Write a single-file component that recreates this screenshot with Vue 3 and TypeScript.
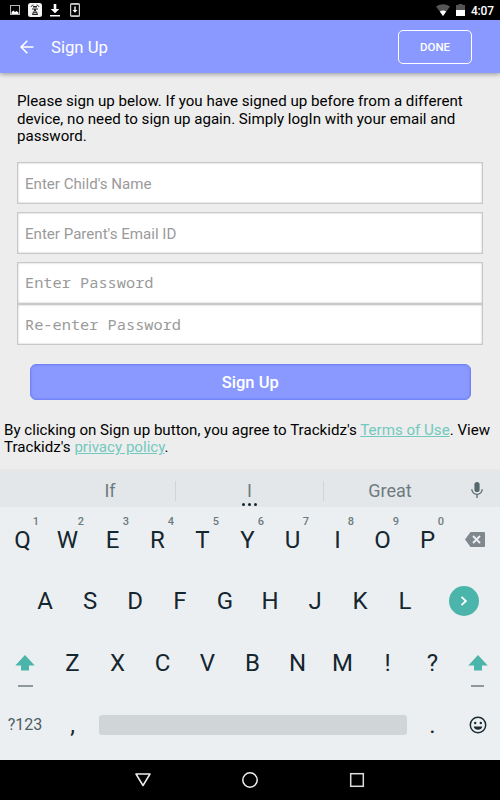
<template>
  <div class="screen">
    <header class="status-bar">
      <div class="status-left">
        <svg width="12" height="12" viewBox="0 0 12 12">
          <rect x="1.500" y="1.500" width="9" height="9" fill="none" stroke="#b8b8b8" />
          <path d="M2.500 10V8l2-1.500 1.500 1.500L7.500 7l2 1.500V10z" fill="#fff" />
        </svg>
        <svg width="14" height="14" viewBox="0 0 14 14">
          <rect width="14" height="14" rx="2.500" fill="#f4f4f4" />
          <path d="M3 4Q3.500 2 5.500 2M11 4Q10.500 2 8.500 2" stroke="#444" fill="none" />
          <path d="M5 3h4v1.500H5zM4 5.500h6v1H8v1.500H6V6.500H4z" fill="#222" />
          <path d="M5 8.500h4l1 3.500H4z" fill="#222" />
          <path d="M5.500 10.300h3" stroke="#eee" />
        </svg>
        <svg width="10" height="13" viewBox="0 0 10 13">
          <path d="M3.700 0h2.600v5h3L5 9.300.7 5h3zM0 11h10v1.600H0z" fill="#fff" />
        </svg>
        <svg width="10" height="14" viewBox="0 0 10 14">
          <rect x=".6" y=".6" width="8.800" height="12.800" rx="1" fill="none" stroke="#ccc" stroke-width="1.200" />
          <path d="M1 1.500h8M1 12.500h8" stroke="#aaa" />
          <path d="M4.300 3.500h1.400v3.500h1.800L5 9.800 2.500 7h1.800z" fill="#fff" />
        </svg>
      </div>
      <div class="status-right">
        <svg width="14" height="12" viewBox="0 0 14 12">
          <path d="M0 2.500Q7-2 14 2.500L7 12z" fill="#555" />
          <path d="M3.800 7.600Q7 5.600 10.200 7.600L7 12z" fill="#fff" />
        </svg>
        <svg width="9" height="12" viewBox="0 0 9 12">
          <path d="M2.500 0h4v1H9v5H0V1h2.500z" fill="#555" />
          <path d="M0 6h9v6H0z" fill="#fff" />
        </svg>
        <span class="clock">4:07</span>
      </div>
    </header>

    <div class="toolbar">
      <button class="back-btn" aria-label="Back">
        <svg width="14" height="14" viewBox="0 0 14 14">
          <path d="M13.500 7H1.300M7.300 .8L1.100 7l6.200 6.200" fill="none" stroke="#fff" stroke-width="1.600" />
        </svg>
      </button>
      <h1>Sign Up</h1>
      <button class="done-btn">DONE</button>
    </div>

    <main class="content">
      <p class="intro">
        Please sign up below. If you have signed up before from a different<br />
        device, no need to sign up again. Simply logIn with your email and<br />
        password.
      </p>

      <form class="form" @submit.prevent>
        <input
          v-for="field in fields"
          :key="field.name"
          v-model="form[field.name]"
          :type="field.type"
          :placeholder="field.label"
          :class="['field', { password: field.type === 'password' }]"
        />
        <button class="signup-btn" type="submit">Sign Up</button>
      </form>

      <p class="terms">
        By clicking on Sign up button, you agree to Trackidz's <a href="#">Terms of Use</a>. View<br />
        Trackidz's <a href="#">privacy policy</a>.
      </p>
    </main>

    <section class="keyboard">
      <div class="suggestions">
        <span class="suggestion first">If</span>
        <span class="suggestion middle">I<i class="more"><b></b><b></b><b></b></i></span>
        <span class="suggestion last">Great</span>
        <svg class="mic" width="12" height="16" viewBox="0 0 12 16">
          <rect x="3.400" y="0" width="5.200" height="10" rx="2.600" fill="#57676e" />
          <path d="M.8 7.200a5.200 5.200 0 0 0 10.400 0M6 12.400V16" fill="none" stroke="#57676e" stroke-width="1.300" />
        </svg>
      </div>

      <div class="keys">
        <div class="row">
          <button v-for="(letter, i) in topRow" :key="letter" class="key">
            {{ letter }}<sup>{{ (i + 1) % 10 }}</sup>
          </button>
          <button class="key wide" aria-label="Delete">
            <svg width="20" height="15" viewBox="0 0 20 15">
              <path d="M5.500 0H19a1 1 0 0 1 1 1v13a1 1 0 0 1-1 1H5.500L0 7.500z" fill="#7e888d" />
              <path d="M8 4l7 7M15 4l-7 7" stroke="#eceff1" stroke-width="1.900" />
            </svg>
          </button>
        </div>

        <div class="row home">
          <button v-for="letter in homeRow" :key="letter" class="key">{{ letter }}</button>
          <button class="key enter" aria-label="Next">
            <span class="enter-circle">
              <svg width="8" height="10" viewBox="0 0 8 10">
                <path d="M1.500 .8L5.900 5 1.500 9.200" fill="none" stroke="#fff" stroke-width="1.800" />
              </svg>
            </span>
          </button>
        </div>

        <div class="row">
          <button class="key wide shift" aria-label="Shift">
            <svg width="20" height="16" viewBox="0 0 20 16">
              <path d="M10 0l9.700 10.500H14V15.500H6V10.500H.3z" fill="#4bb5ab" />
            </svg>
            <i class="dash"></i>
          </button>
          <button v-for="letter in bottomRow" :key="letter" class="key">{{ letter }}</button>
          <button class="key shift" aria-label="Shift">
            <svg width="20" height="16" viewBox="0 0 20 16">
              <path d="M10 0l9.700 10.500H14V15.500H6V10.500H.3z" fill="#4bb5ab" />
            </svg>
            <i class="dash short"></i>
          </button>
        </div>

        <div class="row">
          <button class="key wide symbols">?123</button>
          <button class="key">,</button>
          <button class="key space" aria-label="Space"><span></span></button>
          <button class="key">.</button>
          <button class="key" aria-label="Emoji">
            <svg width="18" height="18" viewBox="0 0 18 18">
              <circle cx="9" cy="9" r="7.700" fill="none" stroke="#1a2b34" stroke-width="1.500" />
              <circle cx="6.200" cy="7" r="1.200" fill="#1a2b34" />
              <circle cx="11.800" cy="7" r="1.200" fill="#1a2b34" />
              <path d="M4.600 10.500h8.800a4.600 4.600 0 0 1-8.800 0z" fill="#1a2b34" />
            </svg>
          </button>
        </div>
      </div>
    </section>

    <nav class="nav-bar">
      <button aria-label="Back">
        <svg width="18" height="16" viewBox="0 0 18 16">
          <path d="M2 2h14L9 13.500z" fill="none" stroke="#eee" stroke-width="1.500" stroke-linejoin="round" />
        </svg>
      </button>
      <button aria-label="Home">
        <svg width="18" height="18" viewBox="0 0 18 18">
          <circle cx="9" cy="9" r="7.200" fill="none" stroke="#eee" stroke-width="1.500" />
        </svg>
      </button>
      <button aria-label="Recent apps">
        <svg width="18" height="18" viewBox="0 0 18 18">
          <rect x="2.700" y="2.700" width="12.600" height="12.600" fill="none" stroke="#ddd" stroke-width="1.500" />
        </svg>
      </button>
    </nav>
  </div>
</template>

<script setup lang="ts">
import { reactive } from 'vue'

type FieldName = 'child' | 'email' | 'password' | 'confirm'

interface Field {
  name: FieldName
  label: string
  type: string
}

const fields: Field[] = [
  { name: 'child', label: "Enter Child's Name", type: 'text' },
  { name: 'email', label: "Enter Parent's Email ID", type: 'email' },
  { name: 'password', label: 'Enter Password', type: 'password' },
  { name: 'confirm', label: 'Re-enter Password', type: 'password' },
]

const form = reactive<Record<FieldName, string>>({
  child: '',
  email: '',
  password: '',
  confirm: '',
})

const topRow = 'QWERTYUIOP'.split('')
const homeRow = 'ASDFGHJKL'.split('')
const bottomRow = 'ZXCVBNM!?'.split('')
</script>

<style>
body {
  margin: 0;
}
</style>

<style scoped>
.screen {
  width: 500px;
  height: 800px;
  display: flex;
  flex-direction: column;
  overflow: hidden;
  background: #ededed;
  color: #000;
  font-family: Roboto, sans-serif;
}

.screen * {
  box-sizing: border-box;
}

button {
  padding: 0;
  border: none;
  background: none;
  font-family: inherit;
  color: inherit;
}

svg {
  display: block;
}

.status-bar {
  height: 20px;
  flex: none;
  display: flex;
  justify-content: space-between;
  align-items: center;
  padding: 0 7px 0 9px;
  background: #000;
}

.status-left {
  display: flex;
  align-items: center;
}

.status-left svg {
  margin-right: 8px;
}

.status-left svg:first-child {
  margin-right: 7px;
}

.status-left svg:nth-child(3) {
  margin-right: 10px;
}

.status-right {
  display: flex;
  align-items: center;
  gap: 6px;
}

.clock {
  width: 22px;
  color: #fff;
  font-size: 12px;
  font-weight: 500;
  line-height: 20px;
  letter-spacing: -0.2px;
  padding-top: 1px;
}

.toolbar {
  height: 53px;
  flex: none;
  display: flex;
  align-items: center;
  padding: 0 28px 0 20px;
  background: #8a99ff;
  color: #fff;
  box-shadow: 0 1px 5px rgba(0, 0, 0, 0.4);
}

.toolbar h1 {
  flex: 1;
  margin: 1px 0 0 17px;
  font-size: 16.7px;
  font-weight: 400;
}

.done-btn {
  width: 74px;
  height: 34px;
  border: 1px solid #fff;
  border-radius: 5px;
  font-size: 11.5px;
  font-weight: 500;
}

.content {
  height: 396px;
  flex: none;
  padding-top: 20px;
  font-size: 15.12px;
  line-height: 17.6px;
}

.content p {
  margin: 0;
  white-space: nowrap;
}

.intro {
  padding-left: 17px;
}

.form {
  display: flex;
  flex-direction: column;
  padding: 16px 17px 0;
}

.field {
  height: 42px;
  margin-bottom: 8px;
  padding: 2px 7px 0;
  border: 1px solid #c8c8c8;
  border-radius: 0;
  outline: none;
  background: #fff;
  box-shadow: inset 0 0 2px #bbb;
  font-family: inherit;
  font-size: 15.1px;
}

.field::placeholder {
  color: #9a9a9a;
  opacity: 1;
}

.field.password {
  margin-bottom: 0;
  padding: 0 7px 1px;
  font-family: 'Noto Sans Mono', 'DejaVu Sans Mono', monospace;
  font-size: 15.3px;
}

.field.password + .field.password {
  height: 41.5px;
  padding-bottom: 2px;
}

.signup-btn {
  height: 36px;
  margin: 18.5px 12.5px 0 13px;
  border: 1px solid #7283f5;
  border-radius: 6px;
  background: #8a99ff;
  box-shadow: inset 0 0 2px #6577f5;
  color: #fff;
  font-size: 16.5px;
  font-weight: 500;
  line-height: 20px;
  padding-top: 3px;
}

.terms {
  padding: 22px 0 0 4px;
}

.terms a {
  color: #72c9c0;
}

.keyboard {
  height: 291px;
  flex: none;
  display: flex;
  flex-direction: column;
  background: #eceff1;
  color: #14262f;
}

.suggestions {
  height: 38px;
  display: flex;
  align-items: center;
  padding-top: 2px;
  border-top: 3px solid #e6e8e8;
  background: #e4e7e9;
  color: #6d7b80;
  font-size: 18px;
}

.suggestion {
  position: relative;
  width: 148px;
  height: 20px;
  line-height: 20px;
  text-align: center;
  border-right: 1px solid #cfd4d6;
}

.suggestion.first {
  width: 176px;
  padding-left: 45px;
}

.suggestion.last {
  width: 132px;
  border: none;
}

/* long-press dots under the middle suggestion */
.more {
  position: absolute;
  left: 66px;
  top: 22px;
  display: flex;
  gap: 3px;
}

.more b {
  width: 3px;
  height: 3px;
  border-radius: 50%;
  background: #14262f;
}

.mic {
  margin: -2px 0 0 15px;
}

.keys {
  flex: 1;
  padding-top: 2px;
}

.row {
  display: flex;
  height: 61.6px;
}

.row.home {
  padding-left: 22.5px;
}

.key {
  position: relative;
  width: 45px;
  flex: none;
  display: flex;
  align-items: center;
  justify-content: center;
  font-size: 24px;
}

.key sup {
  position: absolute;
  right: 6px;
  top: 6px;
  font-size: 11px;
  font-weight: 500;
  line-height: 13px;
  color: #6d7b80;
}

.key.wide {
  width: 50px;
}

.key.enter {
  width: 72.5px;
}

.enter-circle {
  width: 30px;
  height: 30px;
  display: flex;
  align-items: center;
  justify-content: center;
  border-radius: 50%;
  background: #4bb5ab;
}

.dash {
  position: absolute;
  bottom: 7px;
  width: 15px;
  height: 2px;
  background: #8f999d;
}

.dash.short {
  width: 13px;
}

.key.symbols {
  font-size: 16px;
  color: #4c5d65;
}

.key.space {
  width: 315px;
}

.space span {
  width: 308px;
  height: 20px;
  border-radius: 3px;
  background: #d0d5d8;
}

.nav-bar {
  height: 40px;
  flex: none;
  display: flex;
  align-items: center;
  justify-content: center;
  gap: 89px;
  background: #000;
}
</style>
